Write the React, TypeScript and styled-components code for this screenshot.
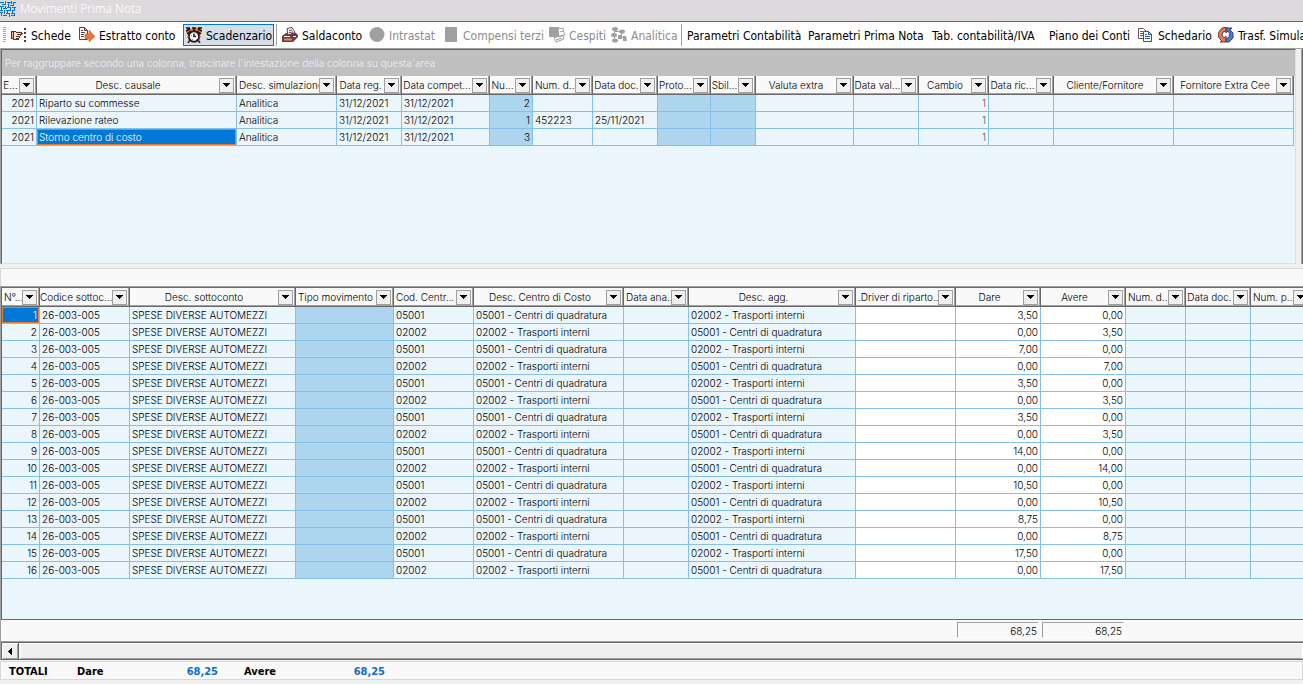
import React from "react";
import styled, { createGlobalStyle } from "styled-components";

const GlobalStyle = createGlobalStyle`
  *, *::before, *::after { box-sizing: border-box; }
  html, body { margin: 0; padding: 0; overflow: hidden; }
  body { background: #f0f0f0; color: #000; font-family: Inter, "Noto Sans", sans-serif; font-size: 10px; font-weight: 300; }
  button { font: inherit; color: inherit; margin: 0; padding: 0; background: none; border: 0; border-radius: 0; }
`;

const Window = styled.div`
  display: flex;
  flex-direction: column;
  min-height: 100vh;
  width: 100%;
  overflow: hidden;
`;

const TitleBar = styled.header`
  display: flex;
  align-items: center;
  gap: 4px;
  height: 22px;
  padding-bottom: 4px;
  background: #ded9dd;
  border-bottom: 1px solid #696969;
  color: #fff;
`;

const Title = styled.h1`
  margin: 0;
  font-family: "Noto Sans", sans-serif;
  font-size: 12px;
  line-height: 16px;
  font-weight: 300;
`;

const Toolbar = styled.nav`
  display: flex;
  align-items: center;
  height: 26px;
  padding-left: 3px;
  background: #fff;
  white-space: nowrap;
  overflow: hidden;
`;

const Grip = styled.span`
  flex: none;
  width: 3px;
  height: 16px;
  margin-right: 2px;
  background: repeating-linear-gradient(#a6a6a6 0 1px, #fff 1px 2px);
`;

const ToolButton = styled.button<{ $width: number; $active?: boolean }>`
  display: flex;
  flex: none;
  align-items: center;
  gap: 4px;
  width: ${(p) => p.$width}px;
  height: 22px;
  padding-left: 2px;
  border: 1px solid ${(p) => (p.$active ? "#0078d7" : "transparent")};
  background: ${(p) => (p.$active ? "#d6dfe8" : "transparent")};
  font-family: "DejaVu Sans Condensed", "DejaVu Sans", sans-serif;
  font-stretch: condensed;
  font-size: 12px;
  font-weight: 400;
  line-height: 16px;
  color: #000;
  &:disabled { color: #8c8c8c; }
`;

const ToolLabel = styled.span`
  padding-top: 1px;
`;

const ToolSeparator = styled.span`
  flex: none;
  width: 1px;
  height: 22px;
  margin: 0 2px;
  background: #a0a0a0;
`;

const Icon = styled.svg`
  flex: none;
  display: block;
`;

const Pane = styled.section`
  overflow: hidden;
  background: #eaf5fc;
  border: solid #696969;
  border-width: 1px 0 0 1px;
`;

const TopArea = styled.div`
  display: flex;
  height: 216px;
  border-top: 1px solid #a0a0a0;
  border-left: 1px solid #a0a0a0;
`;

const TopPane = styled(Pane)`
  flex: 1;
  border-right: 1px solid #e0e0e0;
  border-bottom: 1px solid #e0e0e0;
`;

const SidePane = styled.aside`
  width: 2px;
  margin-left: 5px;
  border-left: 1px solid #a0a0a0;
  background: #696969;
`;

const GroupPanel = styled.div`
  height: 26px;
  padding-left: 3px;
  background: #c0c0c0;
  color: #eceef8;
  line-height: 26px;
`;

const Splitter = styled.div`
  height: 22px;
  padding-top: 4px;
  &::after {
    content: "";
    display: block;
    height: 18px;
    background: #f9f9f9;
    border-top: 1px solid #d8d8d8;
    border-left: 1px solid #d8d8d8;
  }
`;

const BottomArea = styled.main`
  display: flex;
  flex: 1;
  flex-direction: column;
  border-top: 1px solid #a0a0a0;
  border-left: 1px solid #a0a0a0;
`;

const BottomPane = styled(Pane)`
  flex: 1;
`;

const Table = styled.table<{ $width: number }>`
  width: ${(p) => p.$width}px;
  table-layout: fixed;
  border-collapse: separate;
  border-spacing: 0;
`;

const HeadCell = styled.th`
  height: 19px;
  padding: 0;
  border-right: 1px solid #696969;
  border-bottom: 1px solid #696969;
  background: #f9f9f9;
  box-shadow: inset -1px -1px #a0a0a0;
  font-weight: 300;
`;

const HeadContent = styled.div`
  display: flex;
  align-items: center;
  height: 18px;
  padding-right: 2px;
`;

const HeadLabel = styled.span<{ $tight: boolean }>`
  flex: 1;
  min-width: 0;
  padding-left: ${(p) => (p.$tight ? 2 : 0)}px;
  overflow: hidden;
  text-align: ${(p) => (p.$tight ? "left" : "center")};
  white-space: nowrap;
  line-height: 16px;
`;

const FilterButton = styled.button`
  display: grid;
  flex: none;
  place-items: center;
  width: 15px;
  height: 15px;
  border: 1px solid #a0a0a0;
  background: #f0f0f0;
`;

type Align = "left" | "right";

const Cell = styled.td<{ $tone?: Tone; $align?: Align; $muted?: boolean; $selected?: boolean }>`
  height: 17px;
  padding: 0 2px;
  overflow: hidden;
  border-right: 1px solid #84c0e8;
  border-bottom: 1px solid #84c0e8;
  background: ${(p) => (p.$selected ? "#0078d7" : p.$tone === "dark" ? "#aed5f0" : p.$tone === "white" ? "#fff" : "#eaf5fc")};
  color: ${(p) => (p.$selected ? "#fff" : p.$muted ? "#555" : "#000")};
  text-align: ${(p) => p.$align ?? "left"};
  white-space: nowrap;
  line-height: 16px;
  ${(p) => p.$selected && "box-shadow: inset 0 0 0 1px #e87a2c;"}
`;

const SumBar = styled.div`
  display: flex;
  gap: 3px;
  height: 22px;
  padding: 2px 0 3px 956px;
  border-top: 1px solid #696969;
  background: #f9f9f9;
`;

const SumBox = styled.output`
  width: 82px;
  padding-right: 1px;
  border: 1px solid #fff;
  border-top-color: #a0a0a0;
  border-left-color: #a0a0a0;
  text-align: right;
  line-height: 16px;
`;

const ScrollBar = styled.div`
  display: flex;
  height: 19px;
  border-top: 1px solid #a0a0a0;
  border-bottom: 1px solid #696969;
  box-shadow: inset 0 1px #696969, inset 1px 0 #696969;
  background: #efefef;
`;

const ScrollButton = styled.button`
  display: grid;
  place-items: center;
  width: 18px;
  margin-top: 1px;
  border-right: 1px solid #696969;
  border-left: 1px solid #696969;
  box-shadow: inset 1px 1px #fff, inset -1px -1px #a0a0a0;
`;

const ScrollThumb = styled.div`
  flex: 1;
  margin: 1px 0 0 1px;
  border: 1px solid #fff;
  border-bottom-color: #a0a0a0;
`;

const Totals = styled.footer`
  display: flex;
  align-items: center;
  height: 19px;
  margin: 1px 0 4px 0;
  padding: 1px 0 0 8px;
  border: 1px solid #d8d8d8;
  background: #f9f9f9;
  font-family: "DejaVu Sans Condensed", "DejaVu Sans", sans-serif;
  font-stretch: condensed;
  font-size: 11px;
  font-weight: 700;
`;

const TotalsTitle = styled.span`
  width: 68px;
`;

const TotalLabel = styled.span`
  width: 86px;
`;

const TotalValue = styled.output`
  width: 55px;
  margin-right: 26px;
  color: #0f6cc8;
  text-align: right;
`;

type Tone = "light" | "dark" | "white";

interface Column {
  label: string;
  width: number;
  align?: Align;
  tone?: Tone;
  muted?: boolean;
  tight?: boolean;
}

const entryColumns: Column[] = [
  { label: "E...", width: 35, align: "right" },
  { label: "Desc. causale", width: 200 },
  { label: "Desc. simulazione", width: 100, tight: true },
  { label: "Data reg.", width: 65 },
  { label: "Data compet...", width: 88 },
  { label: "Nu...", width: 43, align: "right", tone: "dark" },
  { label: "Num. d...", width: 60, tight: true },
  { label: "Data doc.", width: 65 },
  { label: "Proto...", width: 53, tone: "dark" },
  { label: "Sbil...", width: 45, tone: "dark" },
  { label: "Valuta extra", width: 98 },
  { label: "Data val...", width: 65 },
  { label: "Cambio", width: 70, align: "right", muted: true },
  { label: "Data ric...", width: 65 },
  { label: "Cliente/Fornitore", width: 120 },
  { label: "Fornitore Extra Cee", width: 120 },
];

const entryRow = (cause: string, number: string, docNumber = "", docDate = "") => [
  "2021", cause, "Analitica", "31/12/2021", "31/12/2021", number, docNumber, docDate,
  "", "", "", "", "1", "", "", "",
];

const entryRows = [
  entryRow("Riparto su commesse", "2"),
  entryRow("Rilevazione rateo", "1", "452223", "25/11/2021"),
  entryRow("Storno centro di costo", "3"),
];

const lineColumns: Column[] = [
  { label: "N°...", width: 38, align: "right", tight: true },
  { label: "Codice sottoc...", width: 90 },
  { label: "Desc. sottoconto", width: 166 },
  { label: "Tipo movimento", width: 98, tone: "dark", tight: true },
  { label: "Cod. Centr...", width: 80 },
  { label: "Desc. Centro di Costo", width: 150 },
  { label: "Data ana...", width: 65, tight: true },
  { label: "Desc. agg.", width: 167 },
  { label: ".Driver di riparto...", width: 100, tone: "white", tight: true },
  { label: "Dare", width: 85, align: "right", tone: "white" },
  { label: "Avere", width: 85, align: "right", tone: "white" },
  { label: "Num. d...", width: 60, tight: true },
  { label: "Data doc.", width: 65 },
  { label: "Num. p...", width: 60, tight: true },
];

const centres = [
  ["05001", "05001 - Centri di quadratura"],
  ["02002", "02002 - Trasporti interni"],
];

const amounts = ["3,50", "7,00", "3,50", "3,50", "14,00", "10,50", "8,75", "17,50"];

const lineRows = amounts.flatMap((amount, pair) =>
  [0, 1].map((side) => [
    String(pair * 2 + side + 1), "26-003-005", "SPESE DIVERSE AUTOMEZZI", "",
    centres[side][0], centres[side][1], "", centres[1 - side][1], "",
    side === 0 ? amount : "0,00", side === 0 ? "0,00" : amount, "", "", "",
  ]),
);

interface GridProps {
  label: string;
  columns: Column[];
  rows: string[][];
  selected: [number, number];
}

function Grid({ label, columns, rows, selected }: GridProps) {
  return (
    <Table aria-label={label} $width={columns.reduce((sum, c) => sum + c.width, 0)}>
      <colgroup>
        {columns.map((c, i) => <col key={i} width={c.width} />)}
      </colgroup>
      <thead>
        <tr>
          {columns.map((c, i) => (
            <HeadCell key={i} scope="col">
              <HeadContent>
                <HeadLabel $tight={!!c.tight}>{c.label}</HeadLabel>
                <FilterButton type="button" aria-label={`Filtra ${c.label}`}>
                  <Icon width="7" height="4" viewBox="0 0 7 4" shapeRendering="crispEdges">
                    <path d="M0 0H7V1H6V2H5V3H4V4H3V3H2V2H1V1H0Z" />
                  </Icon>
                </FilterButton>
              </HeadContent>
            </HeadCell>
          ))}
        </tr>
      </thead>
      <tbody>
        {rows.map((row, r) => (
          <tr key={r}>
            {row.map((text, c) => (
              <Cell
                key={c}
                $tone={columns[c].tone}
                $align={columns[c].align}
                $muted={columns[c].muted}
                $selected={selected[0] === r && selected[1] === c}
              >
                {text}
              </Cell>
            ))}
          </tr>
        ))}
      </tbody>
    </Table>
  );
}

const AppIcon = () => (
  <Icon width="16" height="16" viewBox="0 0 16 16" shapeRendering="crispEdges" fill="none" stroke="#0078d7">
    <path d="M0 1.5H4M5.5 0V4M2 3.5H6M7 1.5H11M8.5 1V6M11.5 0V3M13 1.5H16M13.5 2V5M10 4.5H13M0 5.5H4M1.5 5V9M3 7.5H7M5.5 5V8M7 6.5H11M10.5 6V10M12 6.5H16M14.5 6V9M0 9.5H3M4.5 9V13M6 9.5H10M7.5 9V12M12 9.5H15M12.5 9V12M0 11.5H3M1.5 11V15M3 14.5H7M6 12.5H10M9.5 12V16M11 12.5H15M14.5 12V15M11 14.5H14" />
  </Icon>
);

const HandIcon = () => (
  <Icon width="16" height="16" viewBox="0 0 16 16" shapeRendering="crispEdges">
    <path d="M0 4H2V12H0Z" fill="#f0a878" />
    <path d="M2 4H11V8H9V10H8V13H3V12H2Z" fill="#fbe6d6" />
    <path d="M0 4H5V5H11V6H12V7H11V8H6V7H10V6H5V5H0ZM0 11H3V12H8V13H2V12H0ZM5 9H9V10H5ZM5 11H8V12H5ZM9 8H10V9H9ZM8 10H9V11H8ZM2 5H3V11H2ZM0 5H1V11H0ZM13 1H15V3H13ZM13 5H15V7H13ZM13 9H15V11H13ZM13 13H15V15H13Z" fill="#5a3030" />
  </Icon>
);

const ExportIcon = () => (
  <Icon width="16" height="16" viewBox="0 0 16 16">
    <path d="M0.500 0.500H5.500L8.500 3.500V12.500H0.500Z" fill="#fff" stroke="#6b3c44" />
    <path d="M5.500 0.500V3.500H8.500M2 3.500H4M2 5.500H6M2 7.500H5M2 9.500H5" fill="none" stroke="#6b3c44" />
    <path d="M6 7H10V3L16 9.500L10 15V12H6Z" fill="#e5793b" stroke="#b25733" strokeWidth=".5" />
  </Icon>
);

const ClockIcon = () => (
  <Icon width="16" height="16" viewBox="0 0 16 16">
    <path d="M0 5L1 1L7 2L14 0L16 5L13 8H3Z" fill="#e5762c" />
    <path d="M0 1H4M0 4L4 2M6 1H10M12 1H16M16 4L12 2M8 1V4M1 7L5 4M15 7L11 4" stroke="#111" strokeWidth="1.500" />
    <circle cx="8" cy="9.500" r="5.200" fill="#fff" stroke="#331b12" strokeWidth="2" />
    <path d="M8 6.500V9.500H10M4 13L2 16M12 13L14 16" fill="none" stroke="#222" strokeWidth="1.500" />
    <path d="M5 8.500H6M6 12.500H7M10 12.500H11M11 7.500H12M1 10H3M13 10H15" stroke="#e5762c" />
  </Icon>
);

const StampIcon = () => (
  <Icon width="16" height="16" viewBox="0 0 16 16">
    <path d="M0 9L4 6H14L16 8V10L11 15H0Z" fill="#6b3c44" />
    <path d="M5 1.500L10 .5L13 5.500L6 8Z" fill="#fff" stroke="#6b3c44" />
    <path d="M7 3.500L10 3M7 5.500L11 5" stroke="#6b3c44" />
    <path d="M2 9.500H8M11 9.500H14" stroke="#fff" />
    <path d="M2 11.500H10V13.500H2Z" fill="#ef8550" />
  </Icon>
);

const CircleIcon = () => (
  <Icon width="16" height="16" viewBox="0 0 16 16"><circle cx="8" cy="7.500" r="7.500" fill="#a0a0a0" /></Icon>
);

const BlockIcon = () => (
  <Icon width="14" height="16" viewBox="0 0 14 16"><path d="M0 0H12V15H0Z" fill="#a0a0a0" /></Icon>
);

const AssetsIcon = () => (
  <Icon width="16" height="16" viewBox="0 0 16 16">
    <path d="M0 0H10V10H0Z" fill="#a0a0a0" />
    <path d="M9 2L14 1L15.500 8L10 10ZM5 11L14 8L15 12L7 15Z" fill="#fff" stroke="#a0a0a0" />
    <path d="M11 5L14 4M7 13L13 11" stroke="#a0a0a0" />
  </Icon>
);

const TreeIcon = () => (
  <Icon width="16" height="16" viewBox="0 0 16 16" fill="#a0a0a0">
    <path d="M3.500 2V14M3 4.500H10.500V9M8 10H14" fill="none" stroke="#a0a0a0" />
    <ellipse cx="4" cy="2" rx="3" ry="2" />
    <ellipse cx="3" cy="8" rx="3" ry="2" />
    <ellipse cx="4" cy="13.500" rx="3" ry="2" />
    <ellipse cx="11" cy="4.500" rx="3" ry="2" />
    <path d="M7 8H11V12H7ZM12 9H15L16 14H12Z" />
  </Icon>
);

const CopyIcon = () => (
  <Icon width="16" height="16" viewBox="0 0 16 16">
    <path d="M0.500 1.500H5.500L8.500 4.500V11.500H0.500Z" fill="#fff" stroke="#6b5660" />
    <path d="M2 4.500H5M2 6.500H5M2 8.500H5" stroke="#6b5660" />
    <path d="M5.500 4.500H10.500L13.500 7.500V14.500H5.500Z" fill="#fff" stroke="#27569b" />
    <path d="M10.500 4.500V7.500H13.500M7 7.500H9M7 9.500H12M7 11.500H12" fill="none" stroke="#27569b" />
  </Icon>
);

const TransferIcon = () => (
  <Icon width="16" height="16" viewBox="0 0 16 16">
    <path d="M9 0L4 1L0 6L1 11L4 14L2 15H8V9L6 11L4 8L5 5L9 4Z" fill="#e57a4a" stroke="#69404c" />
    <path d="M8 1L14 1L12 3L15 6V11L11 15L8 15V12L11 10L12 7L10 4L8 6Z" fill="#3b82d8" stroke="#463c62" />
  </Icon>
);

interface Tool {
  label: string;
  width: number;
  icon?: React.ReactNode;
  active?: boolean;
  disabled?: boolean;
}

const toolGroups: Tool[][] = [
  [
    { label: "Schede", width: 68, icon: <HandIcon /> },
    { label: "Estratto conto", width: 107, icon: <ExportIcon /> },
    { label: "Scadenzario", width: 91, icon: <ClockIcon />, active: true },
  ],
  [
    { label: "Saldaconto", width: 87, icon: <StampIcon /> },
    { label: "Intrastat", width: 76, icon: <CircleIcon />, disabled: true },
    { label: "Compensi terzi", width: 104, icon: <BlockIcon />, disabled: true },
    { label: "Cespiti", width: 62, icon: <AssetsIcon />, disabled: true },
    { label: "Analitica", width: 71, icon: <TreeIcon />, disabled: true },
  ],
  [
    { label: "Parametri Contabilità", width: 121 },
    { label: "Parametri Prima Nota", width: 124 },
    { label: "Tab. contabilità/IVA", width: 117 },
    { label: "Piano dei Conti", width: 89 },
    { label: "Schedario", width: 80, icon: <CopyIcon /> },
    { label: "Trasf. Simulazioni", width: 130, icon: <TransferIcon /> },
  ],
];

export default function App() {
  return (
    <Window>
      <GlobalStyle />
      <TitleBar>
        <AppIcon />
        <Title>Movimenti Prima Nota</Title>
      </TitleBar>
      <Toolbar aria-label="Strumenti">
        <Grip />
        {toolGroups.map((group, g) => (
          <React.Fragment key={g}>
            {g > 0 && <ToolSeparator />}
            {group.map((tool) => (
              <ToolButton
                key={tool.label}
                type="button"
                $width={tool.width}
                $active={tool.active}
                aria-pressed={tool.active}
                disabled={tool.disabled}
              >
                {tool.icon}
                <ToolLabel>{tool.label}</ToolLabel>
              </ToolButton>
            ))}
          </React.Fragment>
        ))}
      </Toolbar>
      <TopArea>
        <TopPane>
          <GroupPanel>Per raggruppare secondo una colonna, trascinare l'intestazione della colonna su questa'area</GroupPanel>
          <Grid label="Registrazioni" columns={entryColumns} rows={entryRows} selected={[2, 1]} />
        </TopPane>
        <SidePane />
      </TopArea>
      <Splitter />
      <BottomArea>
        <BottomPane>
          <Grid label="Movimenti" columns={lineColumns} rows={lineRows} selected={[0, 0]} />
        </BottomPane>
        <SumBar>
          <SumBox aria-label="Totale dare">68,25</SumBox>
          <SumBox aria-label="Totale avere">68,25</SumBox>
        </SumBar>
        <ScrollBar>
          <ScrollButton type="button" aria-label="Scorri a sinistra">
            <Icon width="4" height="7" viewBox="0 0 4 7" shapeRendering="crispEdges">
              <path d="M4 0V7H3V6H2V5H1V4H0V3H1V2H2V1H3V0Z" />
            </Icon>
          </ScrollButton>
          <ScrollThumb />
        </ScrollBar>
      </BottomArea>
      <Totals>
        <TotalsTitle>TOTALI</TotalsTitle>
        <TotalLabel>Dare</TotalLabel>
        <TotalValue>68,25</TotalValue>
        <TotalLabel>Avere</TotalLabel>
        <TotalValue>68,25</TotalValue>
      </Totals>
    </Window>
  );
}
